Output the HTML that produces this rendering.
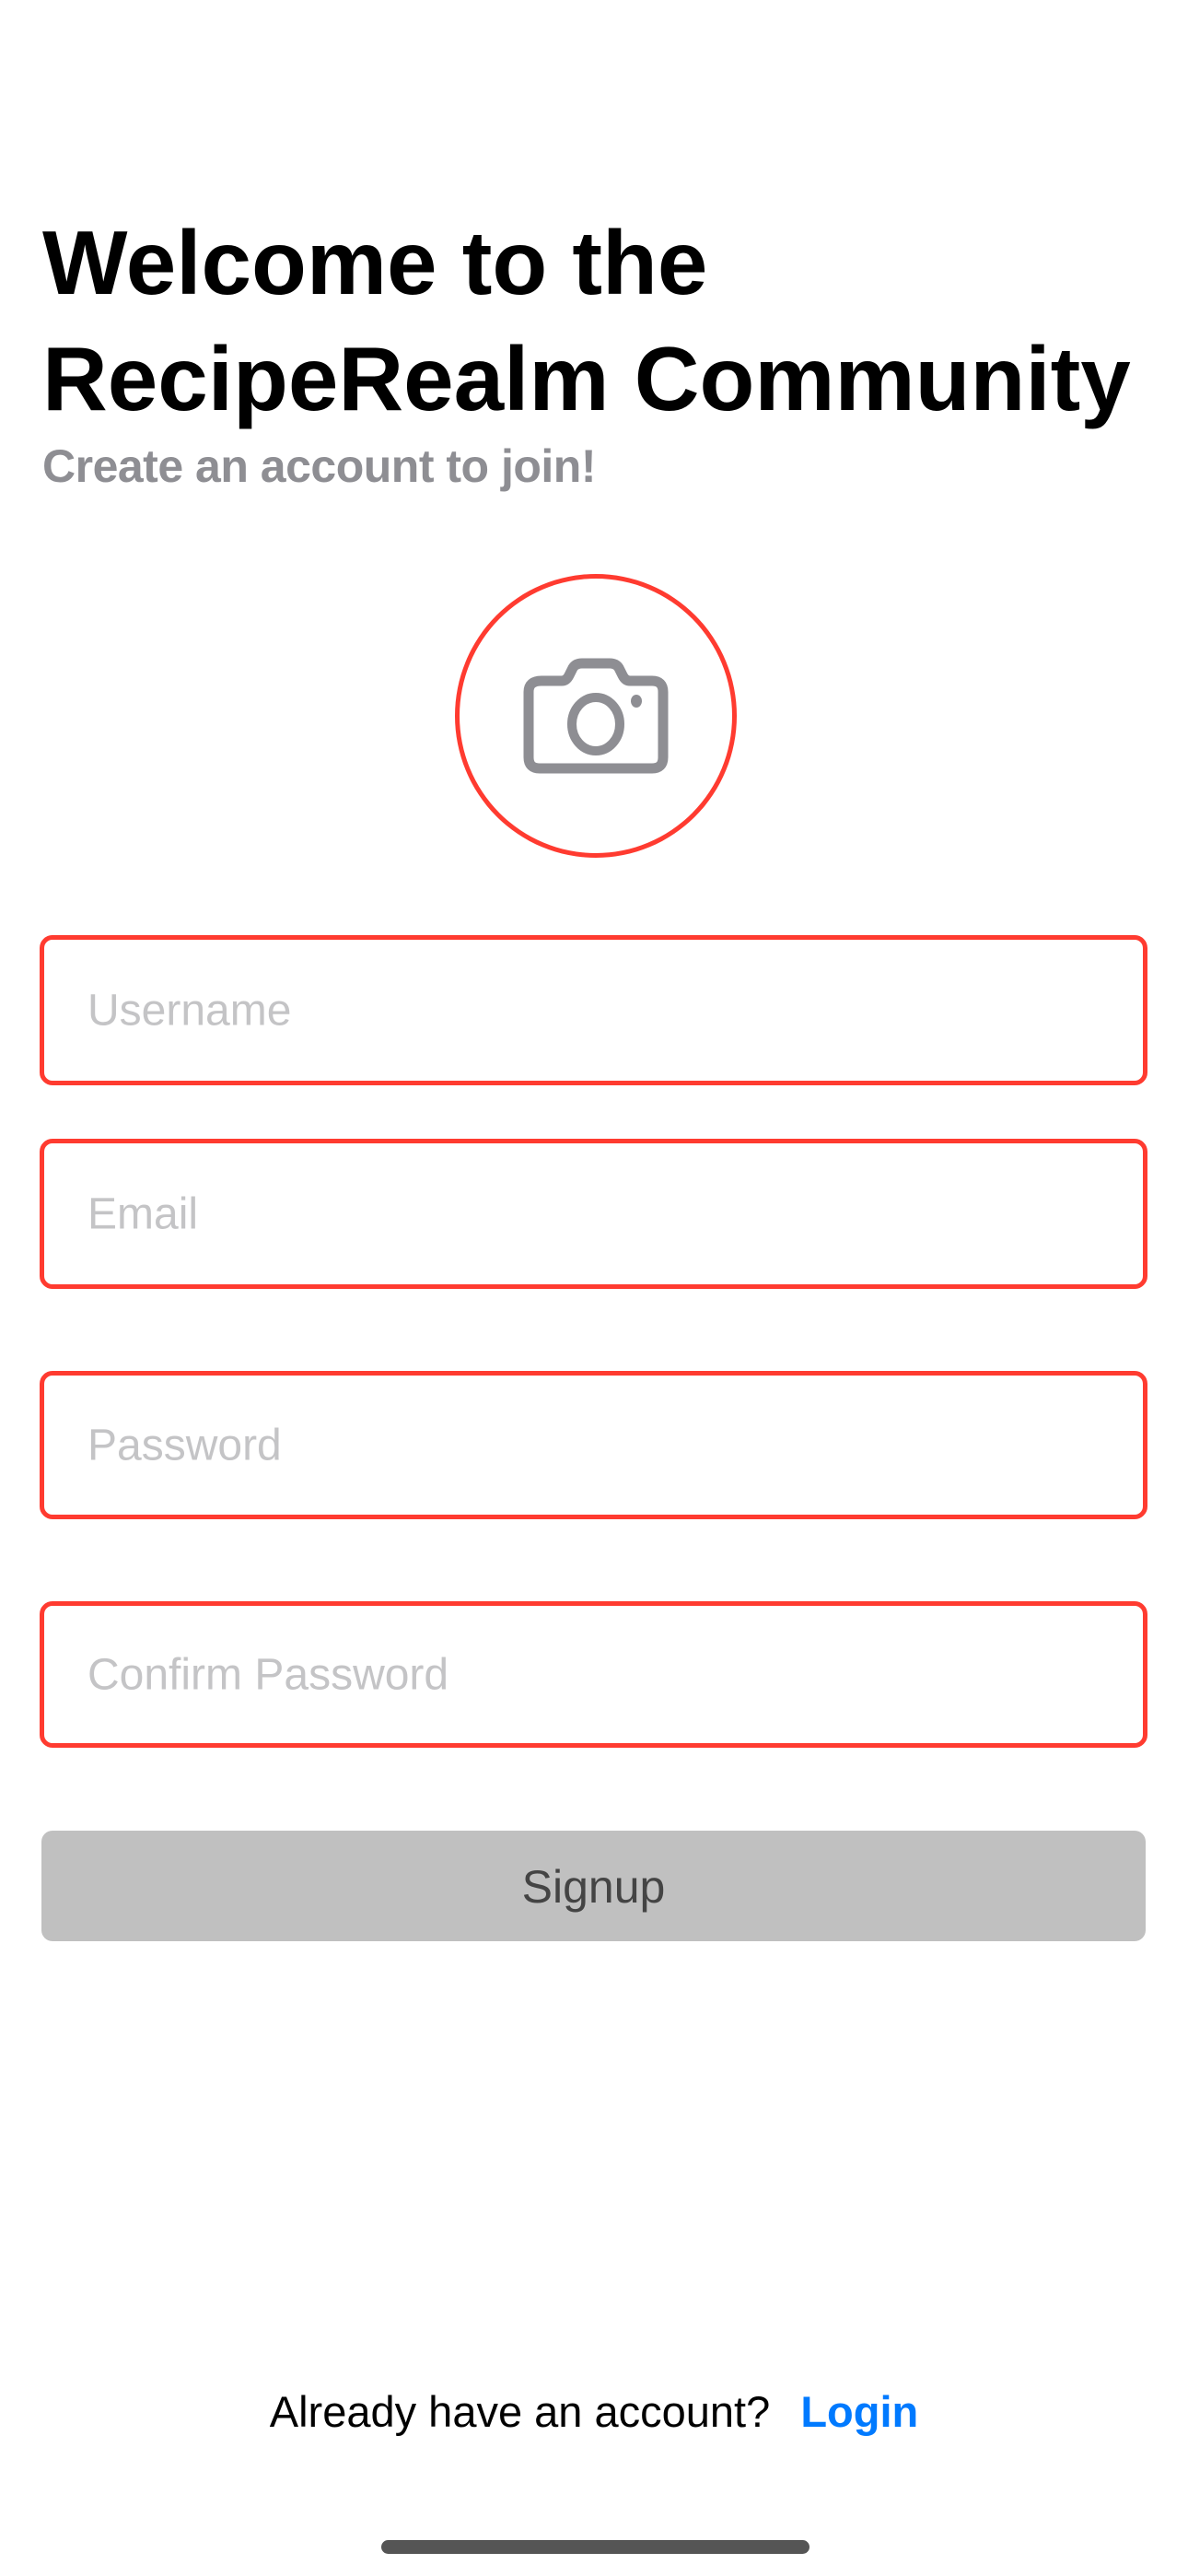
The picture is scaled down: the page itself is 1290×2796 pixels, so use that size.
<!DOCTYPE html>
<html><head><meta charset="utf-8"><style>
*{margin:0;padding:0;box-sizing:border-box}
body{width:1290px;height:2796px;background:#fff;position:relative;overflow:hidden;font-family:"Liberation Sans",sans-serif}
.t{position:absolute;left:46px;font-weight:bold;font-size:98px;color:#000;line-height:126px;top:222px;white-space:nowrap}
.sub{position:absolute;left:46px;top:477px;font-size:50px;font-weight:bold;color:#8e8e93;white-space:nowrap;letter-spacing:-0.5px}
.circ{position:absolute;left:494px;top:623px;width:306px;height:308px;border:5px solid #ff3b30;border-radius:50%}
.f{position:absolute;left:43px;width:1203px;border:5px solid #ff3b30;border-radius:14px}
.f span{position:absolute;left:47px;top:50%;transform:translateY(-50%);font-size:48px;color:#c4c4c6}
.btn{position:absolute;left:45px;top:1987px;width:1199px;height:120px;background:#c0c0c0;border-radius:12px;text-align:center;line-height:122px;font-size:50px;color:#444}
.foot{position:absolute;left:0;width:1290px;top:2590px;text-align:center;font-size:47px;color:#000;white-space:nowrap}
.foot b{color:#007aff;margin-left:20px}
.home{position:absolute;left:414px;top:2757px;width:465px;height:15px;border-radius:8px;background:#555}
</style></head><body>
<div class="t">Welcome to the<br>RecipeRealm Community</div>
<div class="sub">Create an account to join!</div>
<div class="circ"></div>
<svg style="position:absolute;left:566px;top:714px" width="162" height="126" viewBox="0 0 162 126">
<path d="M22 25 H44 Q49 25 52 19 L56 11 Q59 6 66 6 H96 Q103 6 106 11 L110 19 Q113 25 118 25 H142 Q154 25 154 37 V108 Q154 120 142 120 H20 Q8 120 8 108 V37 Q8 25 22 25 Z" fill="none" stroke="#8e8e93" stroke-width="11" stroke-linejoin="round"/>
<ellipse cx="81" cy="72" rx="26" ry="29" fill="none" stroke="#8e8e93" stroke-width="10"/>
<ellipse cx="125" cy="47" rx="6" ry="7" fill="#8e8e93"/>
</svg>
<div class="f" style="top:1015px;height:163px"><span>Username</span></div>
<div class="f" style="top:1236px;height:163px"><span>Email</span></div>
<div class="f" style="top:1488px;height:161px"><span>Password</span></div>
<div class="f" style="top:1738px;height:159px"><span>Confirm Password</span></div>
<div class="btn">Signup</div>
<div class="foot">Already have an account? <b>Login</b></div>
<div class="home"></div>
</body></html>
